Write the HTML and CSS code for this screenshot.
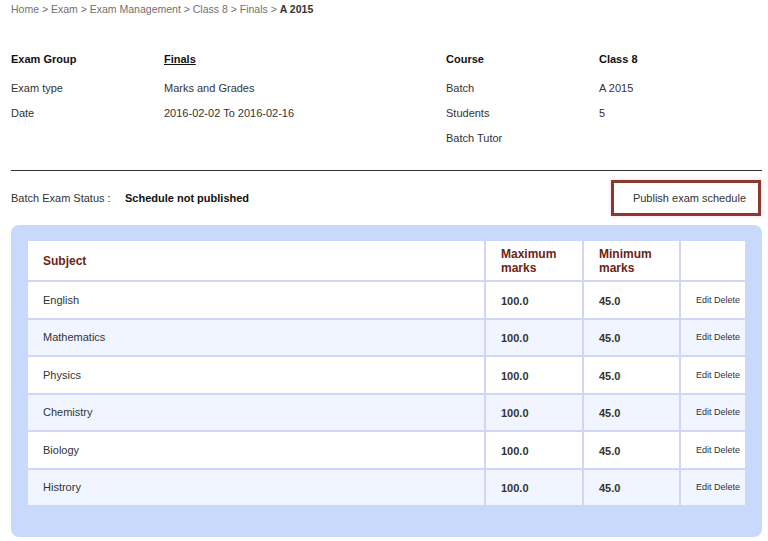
FILE: index.html
```html
<!DOCTYPE html>
<html>
<head>
<meta charset="utf-8">
<link rel="stylesheet" href="styles.css">
</head>
<body>
<div class="page">
  <div class="crumbs">Home &gt; Exam &gt; Exam Management &gt; Class 8 &gt; Finals &gt; <span class="cur">A 2015</span></div>

  <div class="info">
    <div class="row first">
      <div class="lbl b">Exam Group</div><div class="val b u">Finals</div>
      <div class="lbl b">Course</div><div class="val b">Class 8</div>
    </div>
    <div class="row">
      <div class="lbl">Exam type</div><div class="val">Marks and Grades</div>
      <div class="lbl">Batch</div><div class="val">A 2015</div>
    </div>
    <div class="row">
      <div class="lbl">Date</div><div class="val">2016-02-02 To 2016-02-16</div>
      <div class="lbl">Students</div><div class="val">5</div>
    </div>
    <div class="row">
      <div class="lbl"></div><div class="val"></div>
      <div class="lbl">Batch Tutor</div><div class="val"></div>
    </div>
  </div>

  <div class="rule"></div>

  <div class="status">
    <div class="st-lbl">Batch Exam Status :</div>
    <div class="st-val">Schedule not published</div>
    <div class="publish">Publish exam schedule</div>
  </div>

  <div class="panel">
    <table class="grid">
      <colgroup><col class="c1"><col class="c2"><col class="c3"><col class="c4"></colgroup>
      <thead>
        <tr><th>Subject</th><th>Maximum<br>marks</th><th>Minimum<br>marks</th><th></th></tr>
      </thead>
      <tbody>
        <tr><td>English</td><td class="num">100.0</td><td class="num">45.0</td><td class="act">Edit Delete</td></tr>
        <tr class="alt"><td>Mathematics</td><td class="num">100.0</td><td class="num">45.0</td><td class="act">Edit Delete</td></tr>
        <tr><td>Physics</td><td class="num">100.0</td><td class="num">45.0</td><td class="act">Edit Delete</td></tr>
        <tr class="alt"><td>Chemistry</td><td class="num">100.0</td><td class="num">45.0</td><td class="act">Edit Delete</td></tr>
        <tr><td>Biology</td><td class="num">100.0</td><td class="num">45.0</td><td class="act">Edit Delete</td></tr>
        <tr class="alt"><td>Histrory</td><td class="num">100.0</td><td class="num">45.0</td><td class="act">Edit Delete</td></tr>
      </tbody>
    </table>
  </div>
</div>
</body>
</html>
```

FILE: styles.css
```css
html, body {
  margin: 0;
  padding: 0;
  background: #ffffff;
}
body {
  font-family: "Liberation Sans", Arial, sans-serif;
  font-size: 11px;
  color: #333333;
}
.page {
  padding: 0 6px 0 11px;
}
.crumbs {
  font-size: 10.5px;
  line-height: 19px;
  color: #707070;
}
.crumbs .cur {
  color: #333333;
  font-weight: bold;
}
.info {
  margin-top: 24px;
}
.row {
  display: grid;
  grid-template-columns: 153px 282px 153px 1fr;
  height: 25px;
  align-items: center;
}
.row.first {
  height: 32px;
}
.b {
  font-weight: bold;
  color: #111111;
}
.u {
  text-decoration: underline;
}
.rule {
  margin-top: 20px;
  height: 1px;
  background: #333333;
}
.status {
  display: flex;
  align-items: center;
  margin-top: 9px;
}
.st-lbl {
  width: 114px;
  font-size: 11px;
  color: #333333;
}
.st-val {
  font-weight: bold;
  color: #111111;
  flex: 1;
}
.publish {
  height: 30px;
  line-height: 30px;
  padding: 0 12px 0 19px;
  margin-right: 1px;
  border: 3px solid #8a3a2a;
  color: #333333;
  background: #ffffff;
  box-shadow: 0 0 4px #f7cdf3;
}
.panel {
  margin-top: 9px;
  background: #c8d9fc;
  border-radius: 8px;
  padding: 16px 17px 32px;
}
.grid {
  width: 100%;
  border-collapse: collapse;
  table-layout: fixed;
}
.c1 { width: 457px; }
.c2 { width: 98px; }
.c3 { width: 97px; }
.c4 { width: 65px; }
.grid th {
  background: #ffffff;
  height: 39px;
  padding: 0 0 0 15px;
  text-align: left;
  vertical-align: middle;
  font-size: 12px;
  line-height: 14px;
  font-weight: bold;
  color: #6b2418;
  border-left: 2px solid #cfd6f6;
  border-bottom: 2px solid #cfd6f6;
}
.grid th:first-child,
.grid td:first-child {
  border-left: none;
}
.grid td {
  height: 35.5px;
  padding: 0 0 0 15px;
  vertical-align: middle;
  background: #ffffff;
  color: #333333;
  border-left: 2px solid #cfd6f6;
  border-bottom: 2px solid #cfd6f6;
}
.grid tr:last-child td {
  border-bottom: none;
}
.grid tr.alt td {
  background: #f0f5ff;
}
.grid td.num {
  font-weight: bold;
  color: #333333;
  padding-top: 2px;
  height: 33.5px;
}
.grid td.act {
  font-size: 9px;
  color: #333333;
}
```
